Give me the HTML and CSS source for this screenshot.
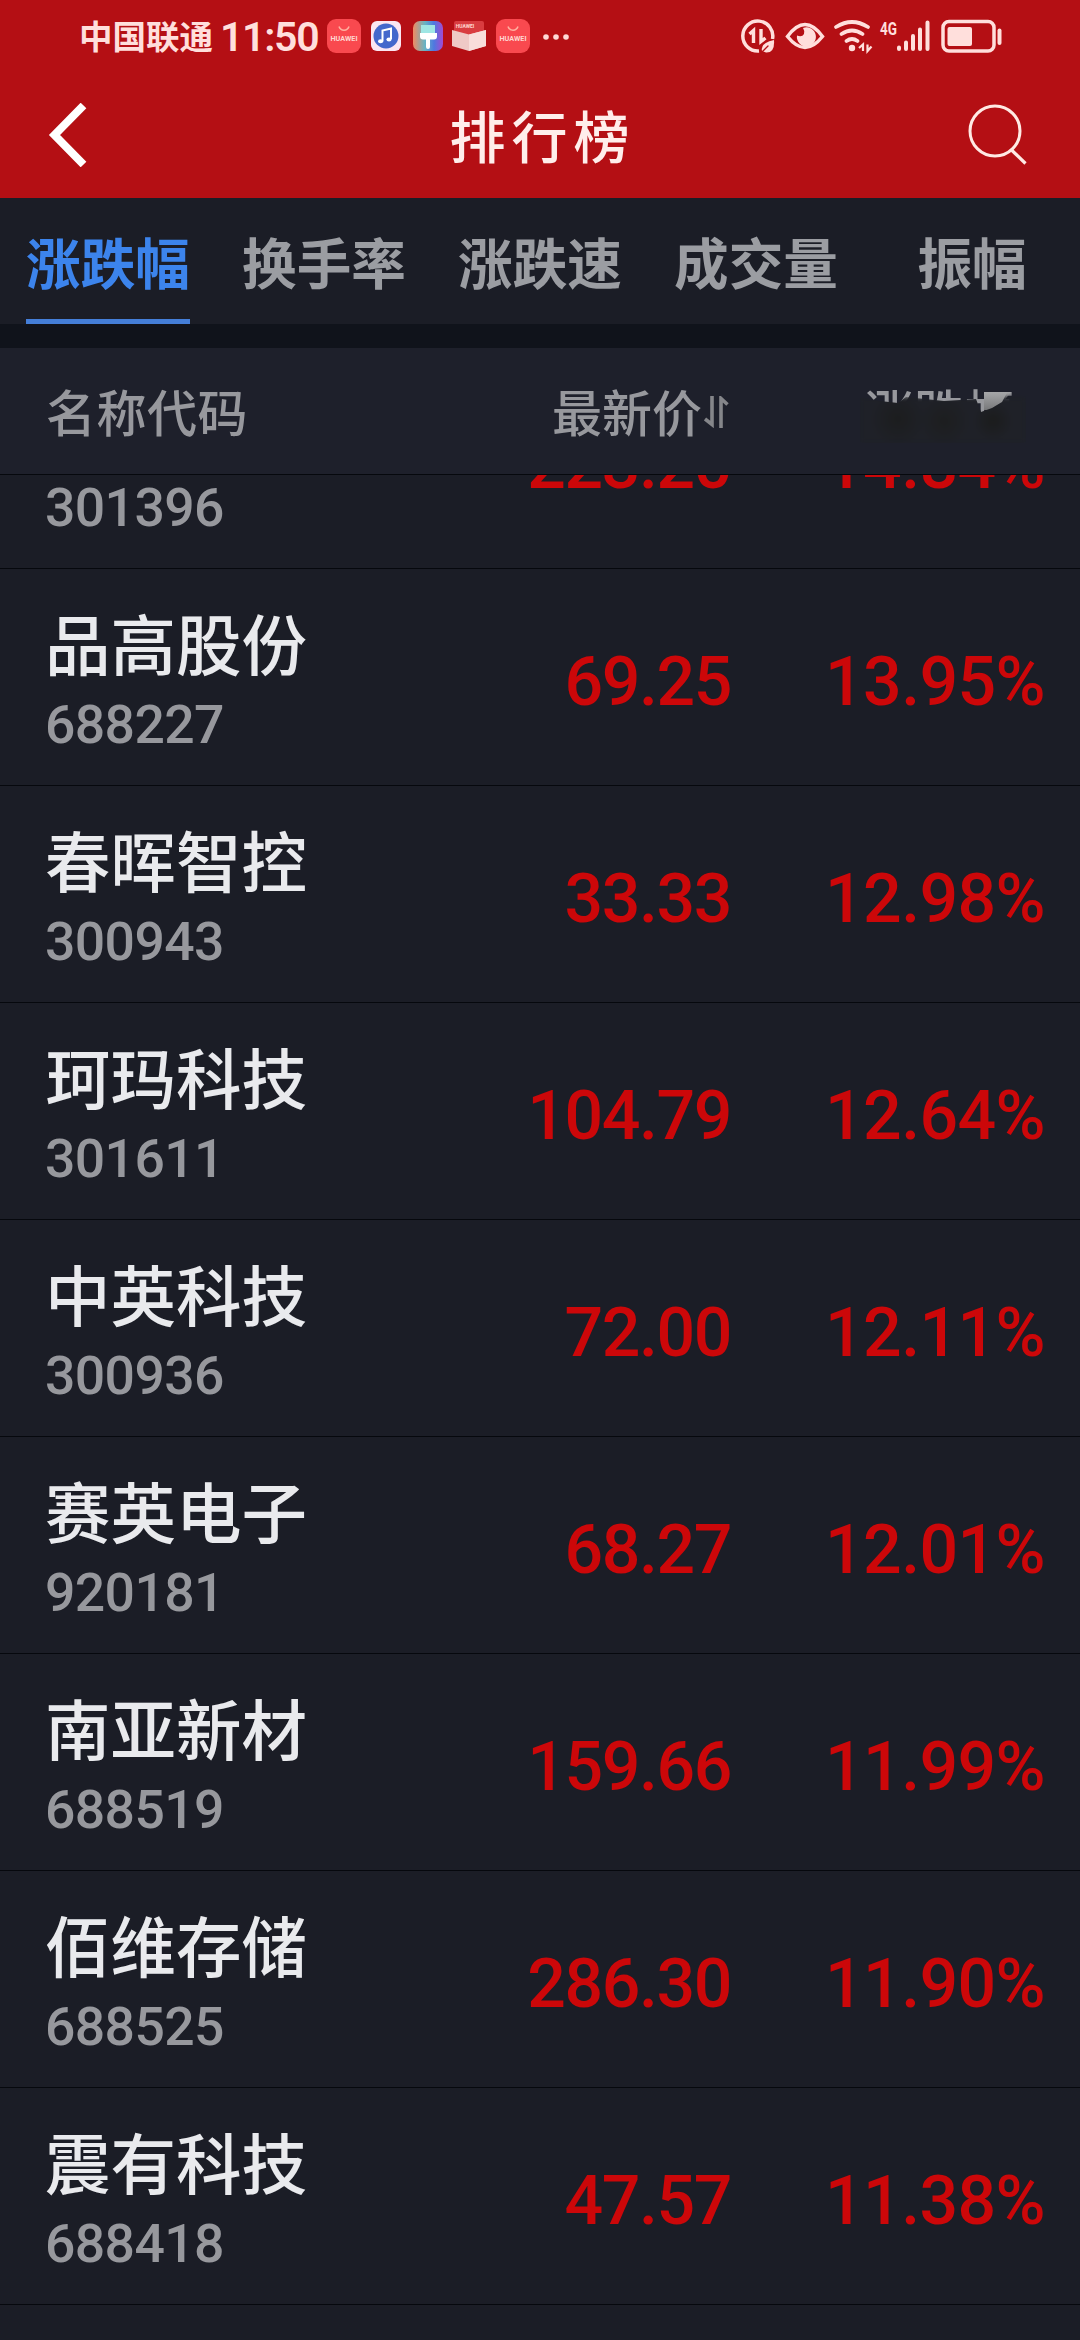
FILE: index.html
```html
<!DOCTYPE html>
<html lang="zh-CN">
<head>
<meta charset="utf-8">
<title>排行榜</title>
<link rel="stylesheet" href="styles.css">
</head>
<body>
<div class="screen">
  <div class="status">
    <span class="carrier">中国联通</span><span class="clock">11:50</span>
    <div class="apps">
      <svg class="app" width="34" height="34" viewBox="0 0 34 34"><rect width="34" height="34" rx="9" fill="#f9494f"/><path d="M12 7.500a5.200 5 0 0 0 10 0" fill="none" stroke="#ffb0a0" stroke-width="1.500"/><text x="17" y="22" text-anchor="middle" textLength="27" lengthAdjust="spacingAndGlyphs" class="brand">HUAWEI</text></svg>
      <svg class="app" width="30" height="30" viewBox="0 0 30 30"><rect width="30" height="30" rx="6" fill="#fbe6f2"/><circle cx="15" cy="15" r="12.500" fill="#4468cc"/><path d="M11.500 20V9.500l8.500-2V18" fill="none" stroke="#fff" stroke-width="2"/><ellipse cx="9.600" cy="20.300" rx="2.600" ry="2" fill="#fff"/><ellipse cx="18" cy="18.500" rx="2.600" ry="2" fill="#fff"/></svg>
      <svg class="app theme-app" width="30" height="30" viewBox="0 0 30 30"><defs><linearGradient id="theme" x1="0" y1="0" x2="1" y2="0"><stop offset="0" stop-color="#f08b62"/><stop offset=".4" stop-color="#66b4c4"/><stop offset=".7" stop-color="#4e78e0"/><stop offset="1" stop-color="#a24bd0"/></linearGradient></defs><rect width="30" height="30" rx="7" fill="url(#theme)"/><path d="M8 4h14v8H8z" fill="#9fe6e4"/><path d="M7 12h17v3.500q0 3-3 3h-4V26q0 2-2 2t-2-2v-7.500h-3q-3 0-3-3z" fill="#fff"/></svg>
      <svg class="app" width="34" height="32" viewBox="0 0 34 32"><path d="M2 3q0-2 2-2h26q2 0 2 2v14H2z" fill="#d93c40"/><text x="13" y="8" text-anchor="middle" class="brand brand-box">HUAWEI</text><path d="M0 10l17 4.500L34 10v16l-17 5L0 26z" fill="#efc9c6"/><path d="M17 14.500L34 10v16l-17 5z" fill="#f8dedb"/></svg>
      <svg class="app" width="34" height="34" viewBox="0 0 34 34"><rect width="34" height="34" rx="9" fill="#f9494f"/><path d="M12 7.500a5.200 5 0 0 0 10 0" fill="none" stroke="#ffb0a0" stroke-width="1.500"/><text x="17" y="22" text-anchor="middle" textLength="27" lengthAdjust="spacingAndGlyphs" class="brand">HUAWEI</text></svg>
      <svg class="more" width="26" height="8" viewBox="0 0 26 8"><g fill="#ffd9d6"><circle cx="3" cy="4" r="2.800"/><circle cx="13" cy="4" r="2.800"/><circle cx="23" cy="4" r="2.800"/></g></svg>
    </div>
    <svg class="signals" width="270" height="40" viewBox="735 17 270 40" fill="none" stroke="#ffdfdc" stroke-linecap="round">
      <path d="M759 51a15 15 0 1 1 13.500-12" stroke-width="3.500" stroke-linecap="butt"/>
      <path d="M749.500 34l4-3.500V43M761 29v12.500l4.500-3.500" stroke-width="3.400" stroke-linecap="butt"/>
      <path d="M762 51q-2-8 12-11q1 13-8 12.500z" fill="#ffdfdc" stroke="none"/><path d="M761 53l7-7" stroke="#b40f14" stroke-width="1.300"/>
      <path d="M787.500 36.500q17.500-24 35 0q-17.500 22-35 0z" stroke-width="3.500"/>
      <path d="M803 28a9.500 9.500 0 1 1-6 7.500q5 2 7-1.500q1-3-1-6z" fill="#ffdfdc" stroke="none"/>
      <path d="M836 27q16-10 32 0M841.500 34q10.500-7 21 0M846.500 41q5.500-4 11 0" stroke-width="3.700"/><circle cx="852" cy="48" r="3.200" fill="#ffdfdc" stroke="none"/>
      <path d="M859 48l4-3.500V51M867.500 44.500V51l4-4.500" stroke-width="2.200" stroke-linecap="butt"/>
      <text x="880" y="35" textLength="17" lengthAdjust="spacingAndGlyphs" class="network">4G</text>
      <path d="M899 47.500v1.500M906 42.500v6.500M913 36v13M920 29.500v19.500M927.500 22.500v26.500" stroke-width="4"/>
      <rect x="943" y="21.500" width="51" height="29.500" rx="6" stroke-width="3.500"/><rect x="947.500" y="27" width="24.500" height="19" rx="2" fill="#ffdfdc" stroke="none"/><path d="M999.500 30.500v12.500" stroke-width="4"/>
    </svg>
  </div>
  <div class="titlebar">
    <svg width="40" height="64" viewBox="0 0 40 64"><path d="M36.500 2.500L7.500 32l29 29.500" fill="none" stroke="#fff" stroke-width="8"/></svg>
    <h1 class="title">排行榜</h1>
    <svg width="60" height="62" viewBox="0 0 60 62"><circle cx="28" cy="27" r="25" fill="none" stroke="#ffe9e4" stroke-width="3"/><path d="M44.500 46L58.500 59.500" stroke="#ffe9e4" stroke-width="3.200"/></svg>
  </div>
  <div class="tabs">
    <div class="tab"><span class="tab-label active">涨跌幅</span></div>
    <div class="tab"><span class="tab-label">换手率</span></div>
    <div class="tab"><span class="tab-label">涨跌速</span></div>
    <div class="tab"><span class="tab-label">成交量</span></div>
    <div class="tab"><span class="tab-label">振幅</span></div>
  </div>
  <div class="thead">
    <div class="h-name">名称代码</div>
    <div class="h-price">最新价<svg class="sort" width="26" height="32" viewBox="0 0 26 32"><path d="M8 0v28.500L1 23M17 32V2.500l6.500 6" fill="none" stroke="#85868a" stroke-width="3.600"/></svg></div>
    <div class="h-change">涨跌幅<span class="tri"></span><span class="smudge"></span></div>
  </div>
  <div class="list">
    <div class="row first"><div class="code">301396</div><div class="price">223.20</div><div class="change">14.84%</div></div>
    <div class="row"><div><div class="name">品高股份</div><div class="code">688227</div></div><div class="price">69.25</div><div class="change">13.95%</div></div>
    <div class="row"><div><div class="name">春晖智控</div><div class="code">300943</div></div><div class="price">33.33</div><div class="change">12.98%</div></div>
    <div class="row"><div><div class="name">珂玛科技</div><div class="code">301611</div></div><div class="price">104.79</div><div class="change">12.64%</div></div>
    <div class="row"><div><div class="name">中英科技</div><div class="code">300936</div></div><div class="price">72.00</div><div class="change">12.11%</div></div>
    <div class="row"><div><div class="name">赛英电子</div><div class="code">920181</div></div><div class="price">68.27</div><div class="change">12.01%</div></div>
    <div class="row"><div><div class="name">南亚新材</div><div class="code">688519</div></div><div class="price">159.66</div><div class="change">11.99%</div></div>
    <div class="row"><div><div class="name">佰维存储</div><div class="code">688525</div></div><div class="price">286.30</div><div class="change">11.90%</div></div>
    <div class="row"><div><div class="name">震有科技</div><div class="code">688418</div></div><div class="price">47.57</div><div class="change">11.38%</div></div>
  </div>
</div>
</body>
</html>
```
FILE: styles.css
```css
* { box-sizing: border-box; }
body { margin: 0; background: #1b1d26; }
.screen {
  width: 1080px; height: 2340px; overflow: hidden;
  display: flex; flex-direction: column;
  font-family: Roboto, "Noto Sans CJK SC", sans-serif;
  background: #1b1d26;
}
.status {
  height: 74px; flex: none; display: flex; align-items: center;
  padding: 0 75px 0 79px; background: #b40f14; color: #ffdfdc;
}
.carrier { font-size: 33.5px; font-weight: 700; line-height: 74px; padding-top: 2px; }
.clock { font-size: 41px; font-weight: 600; letter-spacing: -1.3px; line-height: 76px; margin-left: 7px; width: 101px; white-space: nowrap; }
.apps { display: flex; align-items: center; gap: 10px; margin-left: 6px; margin-bottom: 2px; }
.app + .app { margin-left: -0.5px; }
.app + .theme-app { margin-left: 2px; }
.more { margin-left: 3px; margin-top: 2px; }
.brand { font: 700 6.5px Roboto, sans-serif; fill: #ffd6d0; }
.brand-box { font-size: 5px; }
.network { font: 700 18px Roboto, sans-serif; fill: #ffdfdc; stroke: none; }
.signals { margin-left: auto; flex: none; }
.titlebar {
  height: 124px; flex: none; display: grid; grid-template-columns: 120px 1fr 120px; align-items: center;
  padding: 0 53px 2px 47px; background: #b40f14;
}
.titlebar > svg:last-child { justify-self: end; }
.title { margin: 0; padding: 8px 0 0 11px; font-size: 56px; font-weight: 500; letter-spacing: 6px; color: #ffeeeb; line-height: 80px; text-align: center; }
.tabs { height: 126px; flex: none; display: grid; grid-template-columns: repeat(5, 1fr); background: #1b1d26; }
.tab { display: flex; justify-content: center; }
.tab-label { height: 126px; line-height: 135px; font-size: 54.6px; font-weight: 700; color: #9b9da2; border-bottom: 5px solid transparent; }
.tab-label.active { color: #3c84ec; border-bottom-color: #447ed8; }
.thead {
  height: 151px; flex: none; display: flex; align-items: center;
  border-top: 24px solid #10131b; border-bottom: 1px solid #06080d;
  padding: 0 48px 0 46px; font-size: 50px; font-weight: 500; color: #97989d; background: #1e202b;
}
.thead > div { line-height: 130px; padding-top: 8px; }
.h-name { width: 330px; letter-spacing: 0.5px; }
.h-price { width: 354px; display: flex; justify-content: flex-end; align-items: center; gap: 2px; }
.sort { margin-bottom: 6px; }
.h-change { position: relative; margin-left: auto; display: flex; align-items: center; padding-right: 18px; }
.tri { position: absolute; right: 21px; top: 50px; width: 27px; height: 18px; background: linear-gradient(#a6a7a9, #77787a); clip-path: polygon(0 0, 100% 0, 60% 75%, 45% 100%, 0 100%); }
.smudge {
  position: absolute; left: -4px; top: 55px; width: 166px; height: 46px; filter: blur(2px);
  background: radial-gradient(circle at 38px 22px, #1c1d1e, transparent 28px), radial-gradient(circle at 84px 24px, #1d1e1f, transparent 26px), radial-gradient(circle at 133px 24px, #1b1c1c, transparent 20px), #1f2128;
  clip-path: polygon(0 0, 20px 4px, 38px 6px, 46px 0, 84px 4px, 116px 2px, 121px 15px, 132px 11px, 142px 5px, 148px -6px, 100% 0, 100% 100%, 0 100%);
}
.list { flex: 1; overflow: hidden; }
.row {
  height: 217px; display: grid; grid-template-columns: 330px 353px 1fr;
  padding: 0 36px 0 46px; border-bottom: 1px solid #06080d; background: #1b1d26;
}
.row.first { height: 94px; overflow: hidden; }
.row.first .code { margin-top: 3px; }
.row.first .price, .row.first .change { margin-top: -123px; }
.name { font-size: 65.5px; font-weight: 500; line-height: 90px; margin-top: 34px; margin-left: -1px; color: #e9eaed; }
.code { font-size: 53.5px; font-weight: 500; letter-spacing: -0.6px; line-height: 60px; margin-top: 2px; margin-left: -1px; color: #97989d; }
.price, .change { font-size: 68px; font-weight: 500; line-height: 227px; text-align: right; color: #cc0709; }
.price { letter-spacing: -1.4px; margin-right: -2px; }
.change { letter-spacing: -0.6px; margin-right: -1px; }
```
